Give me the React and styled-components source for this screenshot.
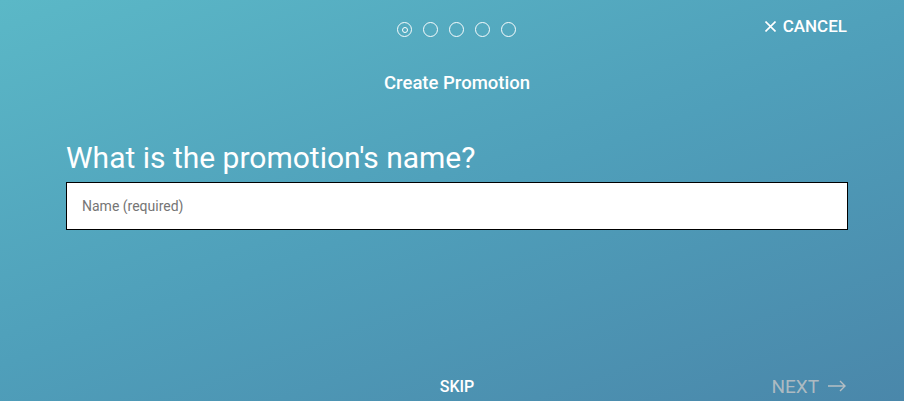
import React from "react";
import styled, { createGlobalStyle } from "styled-components";

const GlobalStyle = createGlobalStyle`
  html, body {
    margin: 0;
    padding: 0;
  }
  body {
    font-family: Roboto, "Liberation Sans", sans-serif;
  }
`;

const Page = styled.div`
  width: 904px;
  height: 401px;
  box-sizing: border-box;
  padding: 0 56px 0 66px;
  background: linear-gradient(160deg, #5bb8c7 0%, #4f9fba 50%, #4a87aa 100%);
  display: flex;
  flex-direction: column;
  color: #fff;
  overflow: hidden;
`;

const TopBar = styled.div`
  height: 58px;
  display: grid;
  grid-template-columns: 1fr auto 1fr;
  align-items: center;
`;

const Steps = styled.div`
  grid-column: 2;
  display: flex;
  gap: 11px;
  margin-top: 1px;
  margin-left: -1px;
`;

const Step = styled.span`
  width: 15px;
  height: 15px;
  box-sizing: border-box;
  border: 1.5px solid rgba(255, 255, 255, 0.95);
  border-radius: 50%;
  display: flex;
  align-items: center;
  justify-content: center;

  &::after {
    content: "";
    display: ${(p) => (p.active ? "block" : "none")};
    width: 6px;
    height: 6px;
    box-sizing: border-box;
    border: 1.5px solid #fff;
    border-radius: 50%;
  }
`;

const Cancel = styled.button`
  grid-column: 3;
  justify-self: end;
  background: none;
  border: none;
  padding: 0;
  color: #fff;
  font-family: Roboto, "Liberation Sans", sans-serif;
  font-weight: 500;
  font-size: 17px;
  display: flex;
  align-items: center;
  gap: 7px;
  margin-top: -6px;
  margin-right: 1px;
  cursor: pointer;
`;

const Title = styled.div`
  text-align: center;
  font-size: 18.5px;
  font-weight: 500;
  margin-top: 14px;
`;

const Question = styled.h1`
  margin: 46px 0 0;
  font-size: 30px;
  font-weight: 400;
  line-height: 1.2;
`;

const NameInput = styled.input`
  margin-top: 6px;
  height: 48px;
  box-sizing: border-box;
  border: 1px solid #000;
  background: #fff;
  padding: 0 15px;
  font-family: Roboto, "Liberation Sans", sans-serif;
  font-size: 14px;
  color: #333;
  outline: none;

  &::placeholder {
    color: #757575;
  }
`;

const Footer = styled.div`
  margin-top: auto;
  height: 30px;
  display: grid;
  grid-template-columns: 1fr auto 1fr;
  align-items: center;
`;

const FooterButton = styled.button`
  background: none;
  border: none;
  padding: 0;
  font-family: Roboto, "Liberation Sans", sans-serif;
  font-weight: ${(p) => (p.disabled ? 400 : 500)};
  font-size: ${(p) => (p.disabled ? "19px" : "16px")};
  color: ${(p) => (p.disabled ? "rgba(200, 200, 200, 0.8)" : "#fff")};
  display: flex;
  align-items: center;
  gap: 9px;
  grid-column: ${(p) => p.col};
  justify-self: ${(p) => (p.col === 3 ? "end" : "center")};
  margin-right: ${(p) => (p.col === 3 ? "2px" : "0")};
`;

const App = () => {
  return (
    <>
      <GlobalStyle />
      <Page>
        <TopBar>
          <Steps>
            <Step active />
            <Step />
            <Step />
            <Step />
            <Step />
          </Steps>
          <Cancel>
            <svg width="11" height="11" viewBox="0 0 11 11">
              <path
                d="M0.5 0.5 L10.5 10.5 M10.5 0.5 L0.5 10.5"
                stroke="#fff"
                strokeWidth="1.6"
                fill="none"
              />
            </svg>
            CANCEL
          </Cancel>
        </TopBar>
        <Title>Create Promotion</Title>
        <Question>What is the promotion's name?</Question>
        <NameInput placeholder="Name (required)" />
        <Footer>
          <FooterButton col={2}>SKIP</FooterButton>
          <FooterButton col={3} disabled>
            NEXT
            <svg width="18" height="12" viewBox="0 0 18 12">
              <path
                d="M0 6 H17 M12 1 L17 6 L12 11"
                stroke="rgba(200,200,200,0.85)"
                strokeWidth="1.4"
                fill="none"
              />
            </svg>
          </FooterButton>
        </Footer>
      </Page>
    </>
  );
};

export default App;
